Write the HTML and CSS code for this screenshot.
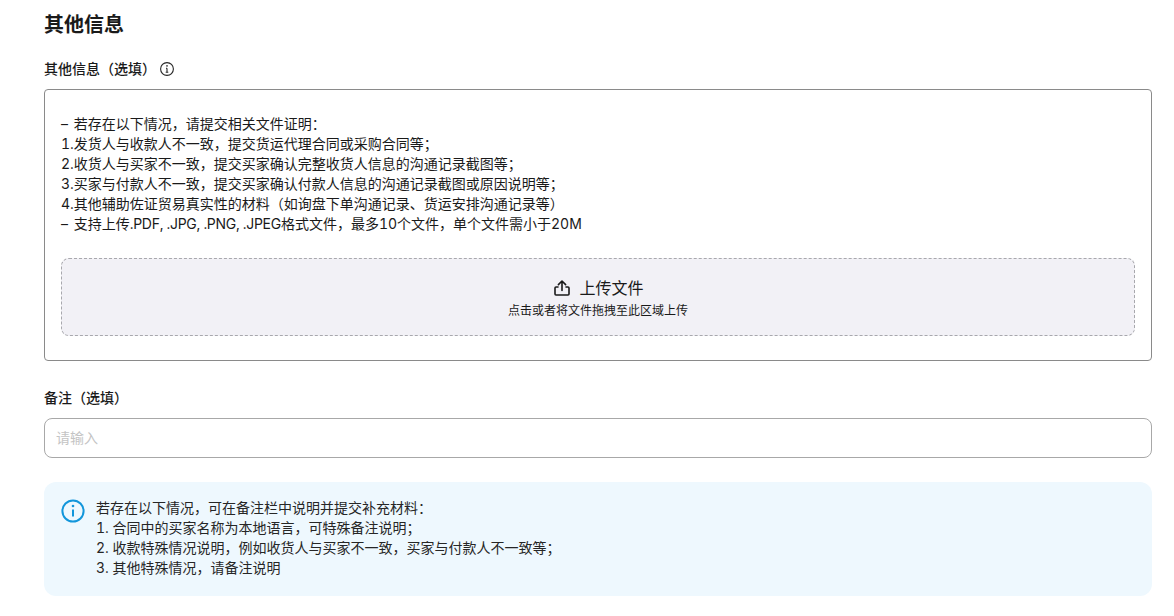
FILE: index.html
```html
<!DOCTYPE html>
<html lang="zh-CN">
<head>
<meta charset="utf-8">
<title>其他信息</title>
<link rel="stylesheet" href="styles.css">
</head>
<body>
<main class="page">
  <h2 class="title">其他信息</h2>
  <div class="label label-first">
    <span>其他信息（选填）</span>
    <svg class="hint" viewBox="0 0 16 16" width="16" height="16" fill="none" stroke="#262626" stroke-width="1.1"><circle cx="8" cy="8" r="6.4"/><path d="M8 7.2v4M6.7 11.2h2.6M7 7.2h1"/><circle cx="8" cy="4.9" r=".8" fill="#262626" stroke="none"/></svg>
  </div>
  <section class="box">
    <div class="rules">
      <p><span class="dash">–</span> 若存在以下情况，请提交相关文件证明：</p>
      <p>1.发货人与收款人不一致，提交货运代理合同或采购合同等；</p>
      <p>2.收货人与买家不一致，提交买家确认完整收货人信息的沟通记录截图等；</p>
      <p>3.买家与付款人不一致，提交买家确认付款人信息的沟通记录截图或原因说明等；</p>
      <p>4.其他辅助佐证贸易真实性的材料（如询盘下单沟通记录、货运安排沟通记录等）</p>
      <p><span class="dash">–</span> 支持上传<span class="formats">.PDF, .JPG, .PNG, .JPEG</span>格式文件，最多10个文件，单个文件需小于20M</p>
    </div>
    <div class="drop">
      <div class="drop-main">
        <svg viewBox="-1 0 18 18" width="18" height="18" fill="none" stroke="#1a1a1a" stroke-width="1.6" stroke-linecap="round" stroke-linejoin="round"><path d="M9 11.5V2.2M5.4 5.6L9 2l3.6 3.6"/><path d="M5 8H3a1 1 0 0 0-1 1v6a1 1 0 0 0 1 1h12a1 1 0 0 0 1-1V9a1 1 0 0 0-1-1h-2"/></svg>
        <span>上传文件</span>
      </div>
      <div class="drop-sub">点击或者将文件拖拽至此区域上传</div>
    </div>
  </section>
  <div class="label label-second"><span>备注（选填）</span></div>
  <input class="field" type="text" placeholder="请输入">
  <aside class="notice">
    <svg class="notice-icon" viewBox="0 0 24 24" width="24" height="24" fill="none" stroke="#1296db" stroke-width="2"><circle cx="12" cy="12" r="10.6"/><path d="M12 10.5v7" stroke-width="2"/><circle cx="12" cy="7" r="1.3" fill="#1296db" stroke="none"/></svg>
    <div class="notice-text">
      <p>若存在以下情况，可在备注栏中说明并提交补充材料：</p>
      <p>1. 合同中的买家名称为本地语言，可特殊备注说明；</p>
      <p>2. 收款特殊情况说明，例如收货人与买家不一致，买家与付款人不一致等；</p>
      <p>3. 其他特殊情况，请备注说明</p>
    </div>
  </aside>
</main>
</body>
</html>
```
FILE: styles.css
```css
* { box-sizing: border-box; }
html, body { margin: 0; padding: 0; background: #fff; }
body {
  font-family: Inter, "Noto Sans CJK SC", sans-serif;
  font-feature-settings: "tnum";
  color: #1a1a1a;
  font-size: 14px;
  line-height: 20px;
  overflow: hidden;
}
p { margin: 0; }
.page { padding: 11px 22px 20px 44px; }
.title { margin: 0; font-size: 20px; line-height: 28px; font-weight: 600; }
.label {
  display: flex;
  align-items: center;
  gap: 3px;
  height: 20px;
  font-weight: 500;
}
.label-first { margin-top: 20px; }
.label-second { margin-top: 27px; }
.hint { display: block; }
.box {
  margin-top: 10px;
  height: 272px;
  border: 1px solid #8a8a8a;
  border-radius: 4px;
  padding: 24px 16px;
}
.dash { margin-right: 2px; }
.formats { letter-spacing: -0.3px; }
.drop {
  margin-top: 24px;
  height: 78px;
  padding-top: 2px;
  background: #f2f1f6;
  border: 1px dashed #a8a8ad;
  border-radius: 8px;
  display: flex;
  flex-direction: column;
  align-items: center;
  justify-content: center;
}
.drop-main {
  display: flex;
  align-items: center;
  gap: 9px;
  font-size: 16px;
  line-height: 24px;
}
.drop-sub { font-size: 12px; line-height: 18px; margin-top: 2px; }
.field {
  display: block;
  width: 100%;
  height: 40px;
  margin-top: 10px;
  padding: 0 11px 2px;
  border: 1px solid #a8a8a8;
  border-radius: 8px;
  font: inherit;
  color: inherit;
  outline: none;
}
.field::placeholder { color: #c4c4c4; opacity: 1; }
.notice {
  display: flex;
  gap: 11px;
  margin-top: 24px;
  height: 114px;
  padding: 16px 17px;
  background: #eef8fe;
  border-radius: 12px;
}
.notice-icon { flex: none; margin-top: 1px; }
.notice-text { color: #262626; }
```
